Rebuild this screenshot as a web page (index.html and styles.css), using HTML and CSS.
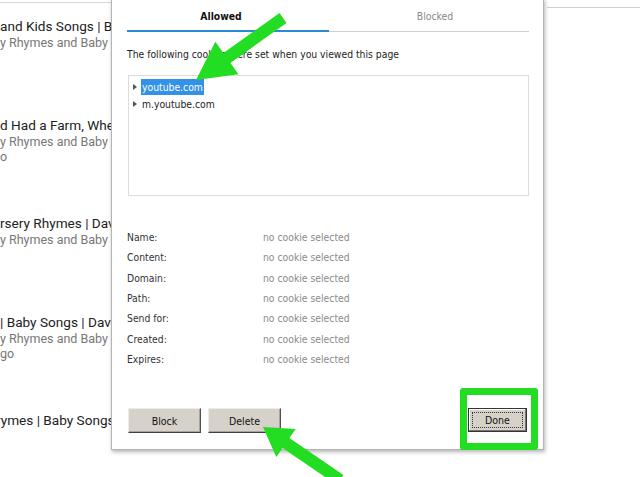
FILE: index.html
```html
<!DOCTYPE html>
<html lang="en">
<head>
    <meta charset="UTF-8">
    <title>Cookies in use</title>
    <link rel="stylesheet" href="styles.css">
</head>
<body>
    <div class="page">
        <div class="masthead">
            <div class="masthead-left"></div>
            <div class="masthead-right"></div>
        </div>

        <!-- video list behind the dialog, only the visible part -->
        <div class="video-list">
            <div class="video">
                <div class="video-title">and Kids Songs | Ba</div>
                <div class="video-meta">y Rhymes and Baby S</div>
            </div>
            <div class="video">
                <div class="video-title">d Had a Farm, Whe</div>
                <div class="video-meta">y Rhymes and Baby S</div>
                <div class="video-meta">o</div>
            </div>
            <div class="video">
                <div class="video-title">rsery Rhymes | Dav</div>
                <div class="video-meta">y Rhymes and Baby S</div>
            </div>
            <div class="video">
                <div class="video-title">| Baby Songs | Dave</div>
                <div class="video-meta">y Rhymes and Baby S</div>
                <div class="video-meta">go</div>
            </div>
            <div class="video">
                <div class="video-title shifted">rymes | Baby Songs |</div>
            </div>
        </div>

        <!-- cookies dialog -->
        <div class="dialog">
            <div class="tabs">
                <div class="tab active">Allowed</div>
                <div class="tab inactive">Blocked</div>
            </div>

            <p class="intro">The following cookies were set when you viewed this page</p>

            <div class="tree">
                <div class="tree-row">
                    <span class="twisty"></span>
                    <span class="tree-label selected">youtube.com</span>
                </div>
                <div class="tree-row">
                    <span class="twisty"></span>
                    <span class="tree-label">m.youtube.com</span>
                </div>
            </div>

            <div class="details">
                <div class="detail-label">Name:</div><div class="detail-value">no cookie selected</div>
                <div class="detail-label">Content:</div><div class="detail-value">no cookie selected</div>
                <div class="detail-label">Domain:</div><div class="detail-value">no cookie selected</div>
                <div class="detail-label">Path:</div><div class="detail-value">no cookie selected</div>
                <div class="detail-label">Send for:</div><div class="detail-value">no cookie selected</div>
                <div class="detail-label">Created:</div><div class="detail-value">no cookie selected</div>
                <div class="detail-label">Expires:</div><div class="detail-value">no cookie selected</div>
            </div>

            <div class="button-row">
                <button class="win-button">Block</button>
                <button class="win-button">Delete</button>
                <button class="win-button default-button"><span class="focus-ring">Done</span></button>
            </div>
        </div>

        <!-- annotations -->
        <div class="highlight-box"></div>
        <svg class="arrow arrow-top" width="110" height="80" viewBox="0 0 110 80">
            <polygon points="11,70 30.3,31.7 38.4,43.1 94.5,3.1 101.5,12.9 45.4,52.9 53.5,64.3" fill="#22dd22"/>
        </svg>
        <svg class="arrow arrow-bottom" width="100" height="70" viewBox="0 0 100 70">
            <polygon points="13,12 45.7,14 39.4,23.1 93.4,60.1 86.6,69.9 32.6,32.9 26.3,42" fill="#22dd22"/>
        </svg>
    </div>
</body>
</html>
```

FILE: styles.css
```css
body {
    margin: 0;
    background-color: #ffffff;
    font-family: Roboto, "Liberation Sans", sans-serif;
    overflow: hidden;
}

.page {
    position: relative;
    width: 640px;
    height: 477px;
    overflow: hidden;
}

.masthead {
    display: flex;
    align-items: flex-start;
}

.masthead-left {
    width: 112px;
    height: 2px;
    border-bottom: 1px solid #d8d8d8;
}

.masthead-right {
    margin-left: auto;
    width: 93px;
    height: 7px;
    border-bottom: 1px solid #d0d0d0;
}

/* background video list, cut by the dialog edge */
.video-list {
    width: 112px;
    overflow: hidden;
    padding-top: 10px;
}

.video {
    height: 98.5px;
}

.video-title {
    font-size: 13.6px;
    line-height: 17px;
    color: #222;
    white-space: nowrap;
}

.video-title.shifted {
    margin-left: -4px;
}

.video-meta {
    font-size: 12.5px;
    line-height: 15px;
    color: #777;
    white-space: nowrap;
}

/* dialog */
.dialog {
    position: absolute;
    left: 111px;
    top: -2px;
    width: 433px;
    height: 452px;
    box-sizing: border-box;
    padding: 2px 14px 16px 15px;
    background-color: #fff;
    border: 1px solid #b4b4b4;
    box-shadow: 1px 2px 4px rgba(0, 0, 0, 0.3);
    display: flex;
    flex-direction: column;
    font-family: "DejaVu Sans Condensed", "Liberation Sans", Tahoma, sans-serif;
    font-size: 10.3px;
    color: #222;
}

.tabs {
    display: flex;
    border-bottom: 1px solid #cfcfcf;
}

.tab {
    flex: 1;
    height: 29px;
    line-height: 31px;
    text-align: center;
    color: #888;
}

.tab.active {
    font-weight: bold;
    color: #111;
    padding-right: 14px;
    border-bottom: 2px solid #2a8ad4;
    margin-bottom: -1px;
}

.tab.inactive {
    padding-left: 12px;
}

.intro {
    margin: 15px 0 0;
    line-height: 14px;
}

.tree {
    margin-top: 14px;
    margin-left: 1px;
    height: 121px;
    box-sizing: border-box;
    border: 1px solid #dcdcdc;
    padding: 2px 0 0 4px;
}

.tree-row {
    display: flex;
    align-items: center;
    height: 17px;
}

.twisty {
    width: 0;
    height: 0;
    border-top: 3px solid transparent;
    border-bottom: 3px solid transparent;
    border-left: 4px solid #555;
    margin-right: 4px;
}

.tree-label {
    padding: 1px 1px;
    line-height: 14px;
}

.tree-label.selected {
    background-color: #3391e8;
    color: #fff;
}

.details {
    margin-top: 31px;
    display: grid;
    grid-template-columns: 136px 1fr;
    grid-auto-rows: 20.3px;
    align-items: center;
}

.detail-label {
    color: #333;
}

.detail-value {
    color: #8a8a8a;
}

.button-row {
    margin-top: auto;
    display: flex;
    align-items: flex-start;
    gap: 7px;
    padding-left: 1px;
}

.win-button {
    width: 73px;
    height: 25px;
    padding: 0;
    font-family: "DejaVu Sans Condensed", "Liberation Sans", Tahoma, sans-serif;
    font-size: 10.5px;
    color: #111;
    background-color: #d6d2ca;
    border: 1px solid;
    border-color: #eeeae4 #505050 #404040 #eeeae4;
    box-shadow: inset -1px -1px 0 #a8a49c;
}

.default-button {
    margin-left: auto;
    margin-right: 2px;
    width: 59px;
    height: 24px;
    border: 1px solid #333;
    box-shadow: inset -1px -1px 0 #777, inset 1px 1px 0 #fff;
    display: flex;
    padding: 3px;
}

.focus-ring {
    flex: 1;
    border: 1px dotted #333;
    display: flex;
    align-items: center;
    justify-content: center;
}

/* annotations */
.highlight-box {
    position: absolute;
    left: 460px;
    top: 388px;
    width: 64px;
    height: 48px;
    border: 7px solid #22dd22;
    border-radius: 3px;
}

.arrow {
    position: absolute;
}

.arrow-top {
    left: 185px;
    top: 10px;
}

.arrow-bottom {
    left: 250px;
    top: 415px;
}
```
